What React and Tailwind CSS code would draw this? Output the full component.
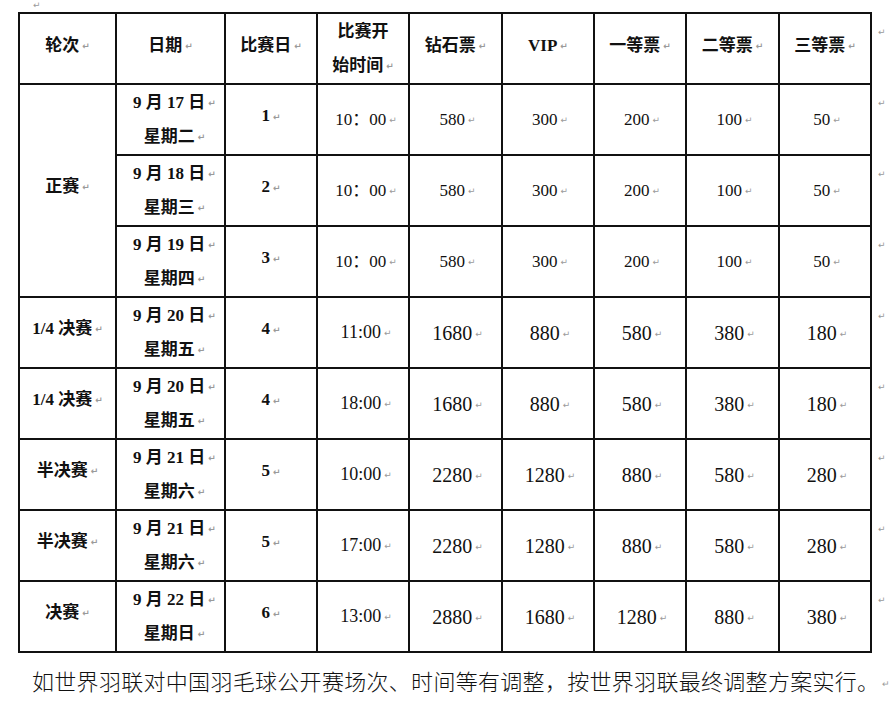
import React from 'react';

const serif = { fontFamily: "'Liberation Serif', 'Noto Sans CJK SC', serif" };

// little paragraph mark like Word shows
function Mark({ className = '' }) {
  return (
    <span className={`text-[9px] leading-none text-[#9a9a9a] ml-[3px] align-middle ${className}`} style={{ fontFamily: "'DejaVu Sans', sans-serif" }}>
      ↵
    </span>
  );
}

const headers = ['轮次', '日期', '比赛日', null, '钻石票', 'VIP', '一等票', '二等票', '三等票'];
const widths = [97, 109, 92, 92, 93, 92, 92, 93, 92];

const rows = [
  { round: '正赛', span: 3, date: '9 月 17 日', week: '星期二', day: '1', time: '10：00', prices: ['580', '300', '200', '100', '50'], small: true },
  { date: '9 月 18 日', week: '星期三', day: '2', time: '10：00', prices: ['580', '300', '200', '100', '50'], small: true },
  { date: '9 月 19 日', week: '星期四', day: '3', time: '10：00', prices: ['580', '300', '200', '100', '50'], small: true },
  { round: '1/4 决赛', span: 1, date: '9 月 20 日', week: '星期五', day: '4', time: '11:00', prices: ['1680', '880', '580', '380', '180'] },
  { round: '1/4 决赛', span: 1, date: '9 月 20 日', week: '星期五', day: '4', time: '18:00', prices: ['1680', '880', '580', '380', '180'] },
  { round: '半决赛', span: 1, date: '9 月 21 日', week: '星期六', day: '5', time: '10:00', prices: ['2280', '1280', '880', '580', '280'] },
  { round: '半决赛', span: 1, date: '9 月 21 日', week: '星期六', day: '5', time: '17:00', prices: ['2280', '1280', '880', '580', '280'] },
  { round: '决赛', span: 1, date: '9 月 22 日', week: '星期日', day: '6', time: '13:00', prices: ['2880', '1680', '1280', '880', '380'] },
];

const cell = 'border-2 border-[#111] text-center align-middle p-0';

export default function App() {
  return (
    <div className="w-[890px] h-[711px] bg-white text-[#111] overflow-hidden" style={serif}>
      {/* stray paragraph mark above the table */}
      <div className="h-[12px] pl-[30px] leading-[8px]">
        <Mark className="ml-0" />
      </div>

      <div className="flex items-start pl-[18px]">
        <table className="table-fixed border-collapse w-[852px]">
          <colgroup>
            {widths.map((w, i) => (
              <col key={i} style={{ width: w }} />
            ))}
          </colgroup>
          <thead>
            <tr className="h-[71px]">
              {headers.map((h, i) => (
                <th key={i} className={`${cell} font-bold text-[17px]`}>
                  {h === null ? (
                    <div className="leading-[34px] h-[68px] overflow-hidden">
                      <div>比赛开</div>
                      <div>始时间<Mark /></div>
                    </div>
                  ) : (
                    <span className="pb-[6px] inline-block">
                      {h}
                      <Mark />
                    </span>
                  )}
                </th>
              ))}
            </tr>
          </thead>
          <tbody>
            {rows.map((r, i) => (
              <tr key={i} className="h-[71px]">
                {r.round && (
                  <td rowSpan={r.span} className={`${cell} font-bold text-[17px]`}>
                    <span className="inline-block pb-[8px]">
                      {r.round}
                      <Mark />
                    </span>
                  </td>
                )}
                <td className={`${cell} font-bold text-[17px]`}>
                  <div className="leading-[34px] h-[68px] overflow-hidden pl-[8px]">
                    <div>{r.date}<Mark /></div>
                    <div>{r.week}<Mark /></div>
                  </div>
                </td>
                <td className={`${cell} font-bold text-[17px]`}>
                  <span className="inline-block pb-[8px] leading-[24px]">
                    {r.day}
                    <Mark />
                  </span>
                </td>
                <td className={`${cell} ${r.small ? 'text-[17px]' : 'text-[18px]'}`}>
                  <span className="inline-block pl-[6px] leading-[24px]">
                    {r.time}
                    <Mark />
                  </span>
                </td>
                {r.prices.map((p, j) => (
                  <td key={j} className={`${cell} ${r.small ? 'text-[17px]' : 'text-[20px]'}`}>
                    <span className="inline-block pl-[4px] leading-[24px]">
                      {p}
                      <Mark />
                    </span>
                  </td>
                ))}
              </tr>
            ))}
          </tbody>
        </table>

        {/* row-end marks outside the table */}
        <div className="flex flex-col pt-[14px]">
          {Array.from({ length: 9 }).map((_, i) => (
            <div key={i} className="h-[71px] pl-[3px] leading-[10px]">
              <Mark className="ml-0" />
            </div>
          ))}
        </div>
      </div>

      <p className="pl-[32px] mt-0 text-[22px] leading-[30px] tracking-[0.3px] whitespace-nowrap" style={{ fontFamily: "'Noto Sans CJK SC', sans-serif", fontWeight: 300 }}>
        如世界羽联对中国羽毛球公开赛场次、时间等有调整，按世界羽联最终调整方案实行。
        <Mark />
      </p>
    </div>
  );
}
